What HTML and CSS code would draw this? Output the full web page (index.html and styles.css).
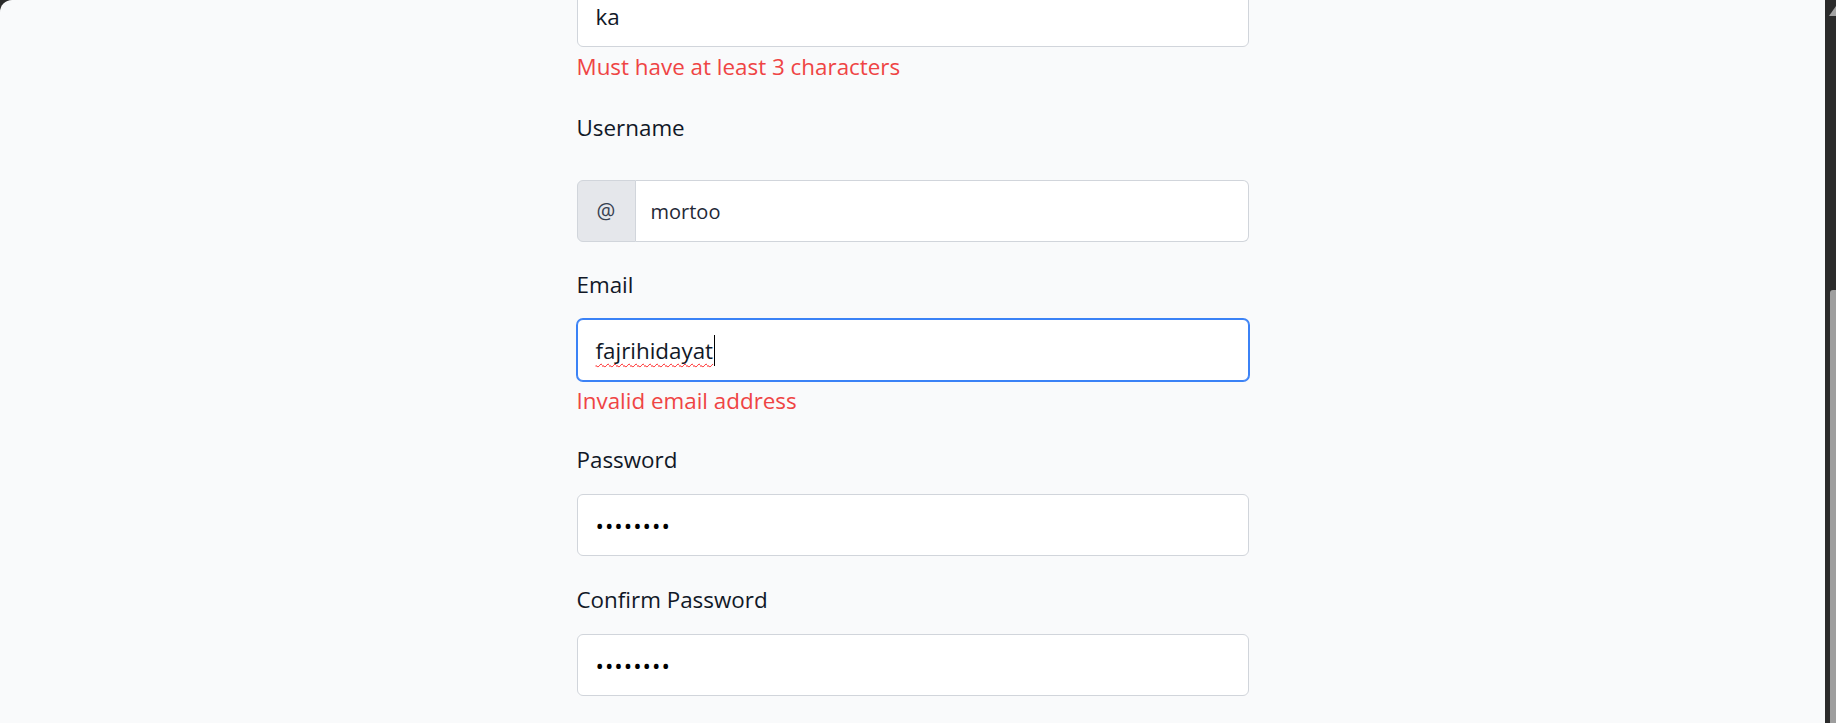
FILE: index.html
```html
<!DOCTYPE html>
<html lang="en">
<head>
<meta charset="utf-8">
<title>Register</title>
<link rel="stylesheet" href="styles.css">
</head>
<body>
<div class="window">
  <main class="page">
    <form class="form">
      <div class="field field--first">
        <div class="input"><span class="value">ka</span></div>
        <p class="error">Must have at least 3 characters</p>
      </div>
      <div class="field field--group">
        <label class="label label--spaced">Username</label>
        <div class="input-group">
          <span class="addon">@</span>
          <div class="input input--grouped"><span class="value value--sm">mortoo</span></div>
        </div>
      </div>
      <div class="field field--error">
        <label class="label">Email</label>
        <div class="input input--focus"><span class="value value--misspelled">fajrihidayat</span><span class="caret"></span></div>
        <p class="error">Invalid email address</p>
      </div>
      <div class="field field--password">
        <label class="label">Password</label>
        <div class="input"><span class="value value--secret">••••••••</span></div>
      </div>
      <div class="field">
        <label class="label">Confirm Password</label>
        <div class="input"><span class="value value--secret">••••••••</span></div>
      </div>
    </form>
  </main>
  <div class="scrollbar">
    <span class="scroll-arrow"></span>
    <span class="scroll-thumb"></span>
  </div>
</div>
</body>
</html>
```
FILE: styles.css
```css
html, body {
  margin: 0;
  height: 100%;
}

body {
  background: #2b2b2b;
  font-family: "Open Sans", "Noto Sans", sans-serif;
  overflow: hidden;
}

.window {
  display: flex;
  height: 723px;
}

.page {
  flex: 1;
  background: #f9fafb;
  border-top-left-radius: 12px;
  overflow: hidden;
}

.form {
  width: 672px;
  margin: -15px auto 0;
  display: flex;
  flex-direction: column;
}

.field {
  display: flex;
  flex-direction: column;
  margin-bottom: 27px;
}

.field--first {
  margin-bottom: 26px;
}

.field--group {
  margin-bottom: 25px;
}

.field--error {
  margin-bottom: 24px;
}

.field--password {
  margin-bottom: 26px;
}

.label {
  display: block;
  font-size: 22.4px;
  line-height: 35px;
  color: #111827;
  margin-bottom: 17px;
}

.label--spaced {
  margin-bottom: 35px;
}

.input {
  box-sizing: border-box;
  height: 62px;
  display: flex;
  align-items: center;
  padding: 0 18px;
  background: #ffffff;
  border: 1px solid #d1d5db;
  border-radius: 6px;
  font-size: 22.4px;
  color: #111827;
}

.input--focus {
  border-color: #3b82f6;
  box-shadow: 0 0 0 1px #3b82f6;
}

.input-group {
  display: flex;
  height: 62px;
}

.addon {
  box-sizing: border-box;
  width: 59px;
  display: flex;
  align-items: center;
  justify-content: center;
  background: #e5e7eb;
  border: 1px solid #d1d5db;
  border-radius: 6px 0 0 6px;
  font-size: 21px;
  color: #374151;
}

.input--grouped {
  flex: 1;
  border-left: none;
  border-radius: 0 6px 6px 0;
  padding-left: 15px;
}

.value--sm {
  font-size: 20px;
  color: #1f2937;
}

.value--misspelled {
  text-decoration: underline wavy #ff1a1a;
  text-decoration-thickness: 1px;
  text-underline-offset: 4px;
  text-decoration-skip-ink: none;
}

.value--secret {
  letter-spacing: 1px;
  color: #000000;
}

.caret {
  display: inline-block;
  width: 1px;
  height: 31px;
  background: #000000;
  margin-left: 1px;
}

.error {
  margin: 2px 0 0;
  font-size: 22.4px;
  line-height: 35px;
  color: #ef4444;
}

.scrollbar {
  width: 11px;
  background: #2b2b2b;
  display: flex;
  flex-direction: column;
  overflow: hidden;
}

.scroll-arrow {
  display: block;
  width: 0;
  height: 0;
  margin: 6px 0 0 4px;
  border-left: 7px solid transparent;
  border-right: 7px solid transparent;
  border-bottom: 10px solid #a3a3a3;
}

.scroll-thumb {
  display: block;
  flex: 1;
  margin: 274px 0 0 5px;
  background: #9e9e9e;
  border-top-left-radius: 3px;
}
```
